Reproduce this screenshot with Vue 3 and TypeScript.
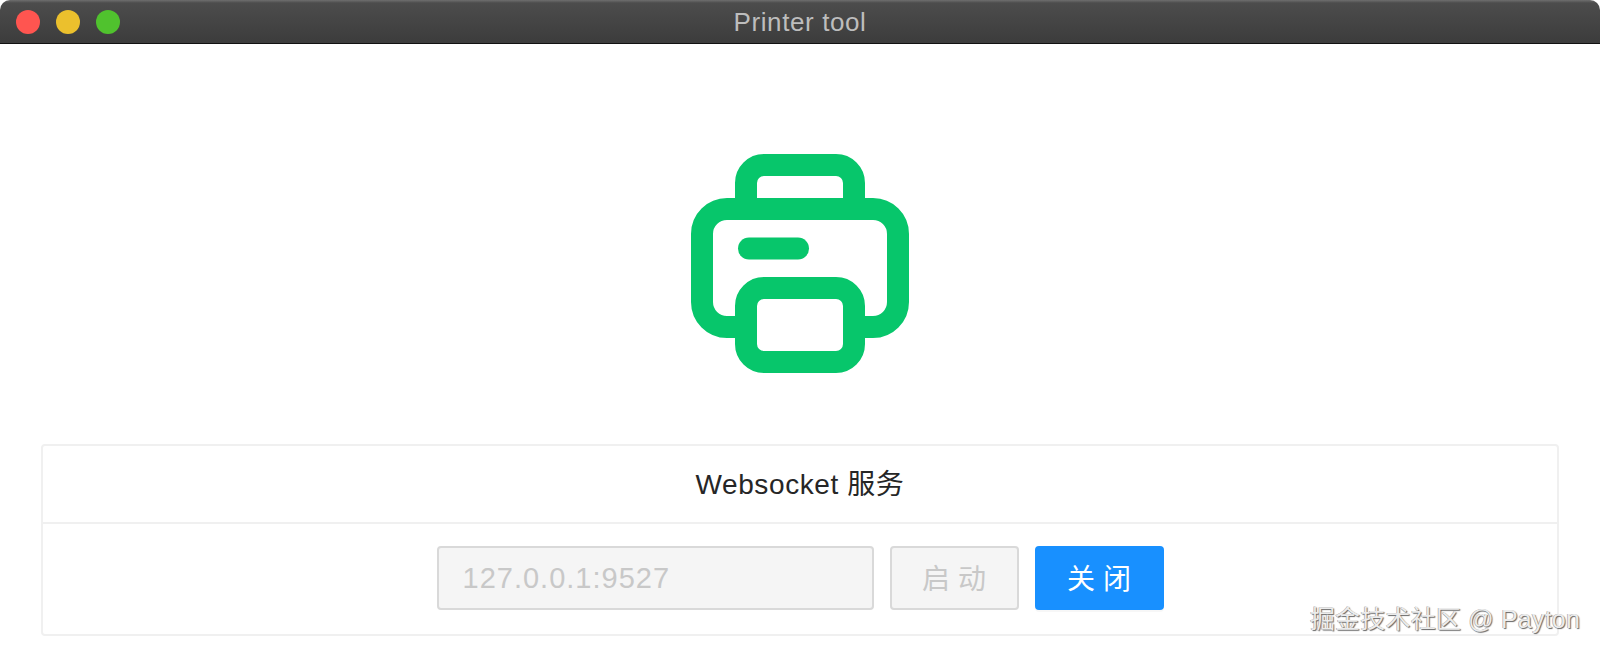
<script setup lang="ts">
const address = '127.0.0.1:9527'
const lights = ['red', 'yellow', 'green']
</script>

<template>
  <div class="window">
    <header class="titlebar">
      <div class="lights">
        <span v-for="l in lights" :key="l" class="light" :class="l"></span>
      </div>
      <span class="title">Printer tool</span>
    </header>

    <div class="logo">
      <svg width="220" height="220" viewBox="690 154 220 220" fill="none" stroke="#07c66b" stroke-width="22" stroke-linejoin="round">
        <rect x="746" y="165" width="108" height="60" rx="18" fill="#fff" />
        <rect x="702" y="209" width="196" height="118" rx="25" fill="#fff" />
        <rect x="746" y="288" width="108" height="74" rx="18" fill="#fff" />
        <line x1="749" y1="248.500" x2="798" y2="248.500" stroke-linecap="round" />
      </svg>
    </div>

    <section class="card">
      <div class="card-head">Websocket 服务</div>
      <div class="card-body">
        <input class="address" type="text" :value="address" disabled />
        <button type="button" class="btn" disabled>启 动</button>
        <button type="button" class="btn primary">关 闭</button>
      </div>
    </section>

    <span class="watermark">掘金技术社区 @ Payton</span>
  </div>
</template>

<style scoped>
.window {
  position: relative;
  width: 1600px;
  height: 654px;
  overflow: hidden;
  background: #fff;
  font-family: "Liberation Sans", "Noto Sans CJK SC", sans-serif;
}
.titlebar {
  position: relative;
  display: flex;
  align-items: center;
  justify-content: center;
  height: 44px;
  padding-top: 1px;
  box-sizing: border-box;
  background: linear-gradient(#6e6e6e 0, #4c4c4c 3px, #3c3c3c 100%);
  border-bottom: 1px solid #111;
  border-radius: 10px 10px 0 0;
}
.lights {
  position: absolute;
  left: 16px;
  top: 10px;
  display: flex;
  gap: 16px;
}
.light {
  width: 24px;
  height: 24px;
  border-radius: 50%;
}
.red { background: #ff5550; }
.yellow { background: #ebc02d; }
.green { background: #50c22e; }
.title {
  font-size: 26px;
  letter-spacing: 0.6px;
  color: #bdbdbd;
}
.logo {
  display: flex;
  justify-content: center;
  padding: 110px 0 70px;
}
.logo svg {
  display: block;
}
.card {
  margin: 0 41px;
  height: 192px;
  box-sizing: border-box;
  border: 2px solid #f0f0f0;
  border-radius: 4px;
}
.card-head {
  display: flex;
  align-items: center;
  justify-content: center;
  height: 72px;
  padding-bottom: 4px;
  border-bottom: 2px solid #f0f0f0;
  font-size: 28px;
  letter-spacing: 0.6px;
  color: #262626;
}
.card-body {
  display: flex;
  justify-content: center;
  gap: 16px;
  padding-top: 22px;
}
.address,
.btn {
  height: 64px;
  box-sizing: border-box;
  border: 2px solid #d9d9d9;
  border-radius: 4px;
  background: #f5f5f5;
  color: #c8c8c8;
  font-family: inherit;
  font-size: 28px;
}
.address {
  width: 437px;
  padding: 0 24px;
  font-size: 29px;
  letter-spacing: 1px;
}
.btn {
  width: 129px;
  padding: 0 0 3px;
}
.primary {
  border-color: #1890ff;
  background: #1890ff;
  color: #fff;
  box-shadow: 0 2px 0 rgba(0, 0, 0, 0.03);
}
.watermark {
  position: absolute;
  right: 20px;
  top: 599px;
  font-size: 25px;
  letter-spacing: 0.2px;
  color: #ececec;
  text-shadow: 1px 1px 1px #666, -0.5px -0.5px 0 #999;
  white-space: nowrap;
}
</style>
